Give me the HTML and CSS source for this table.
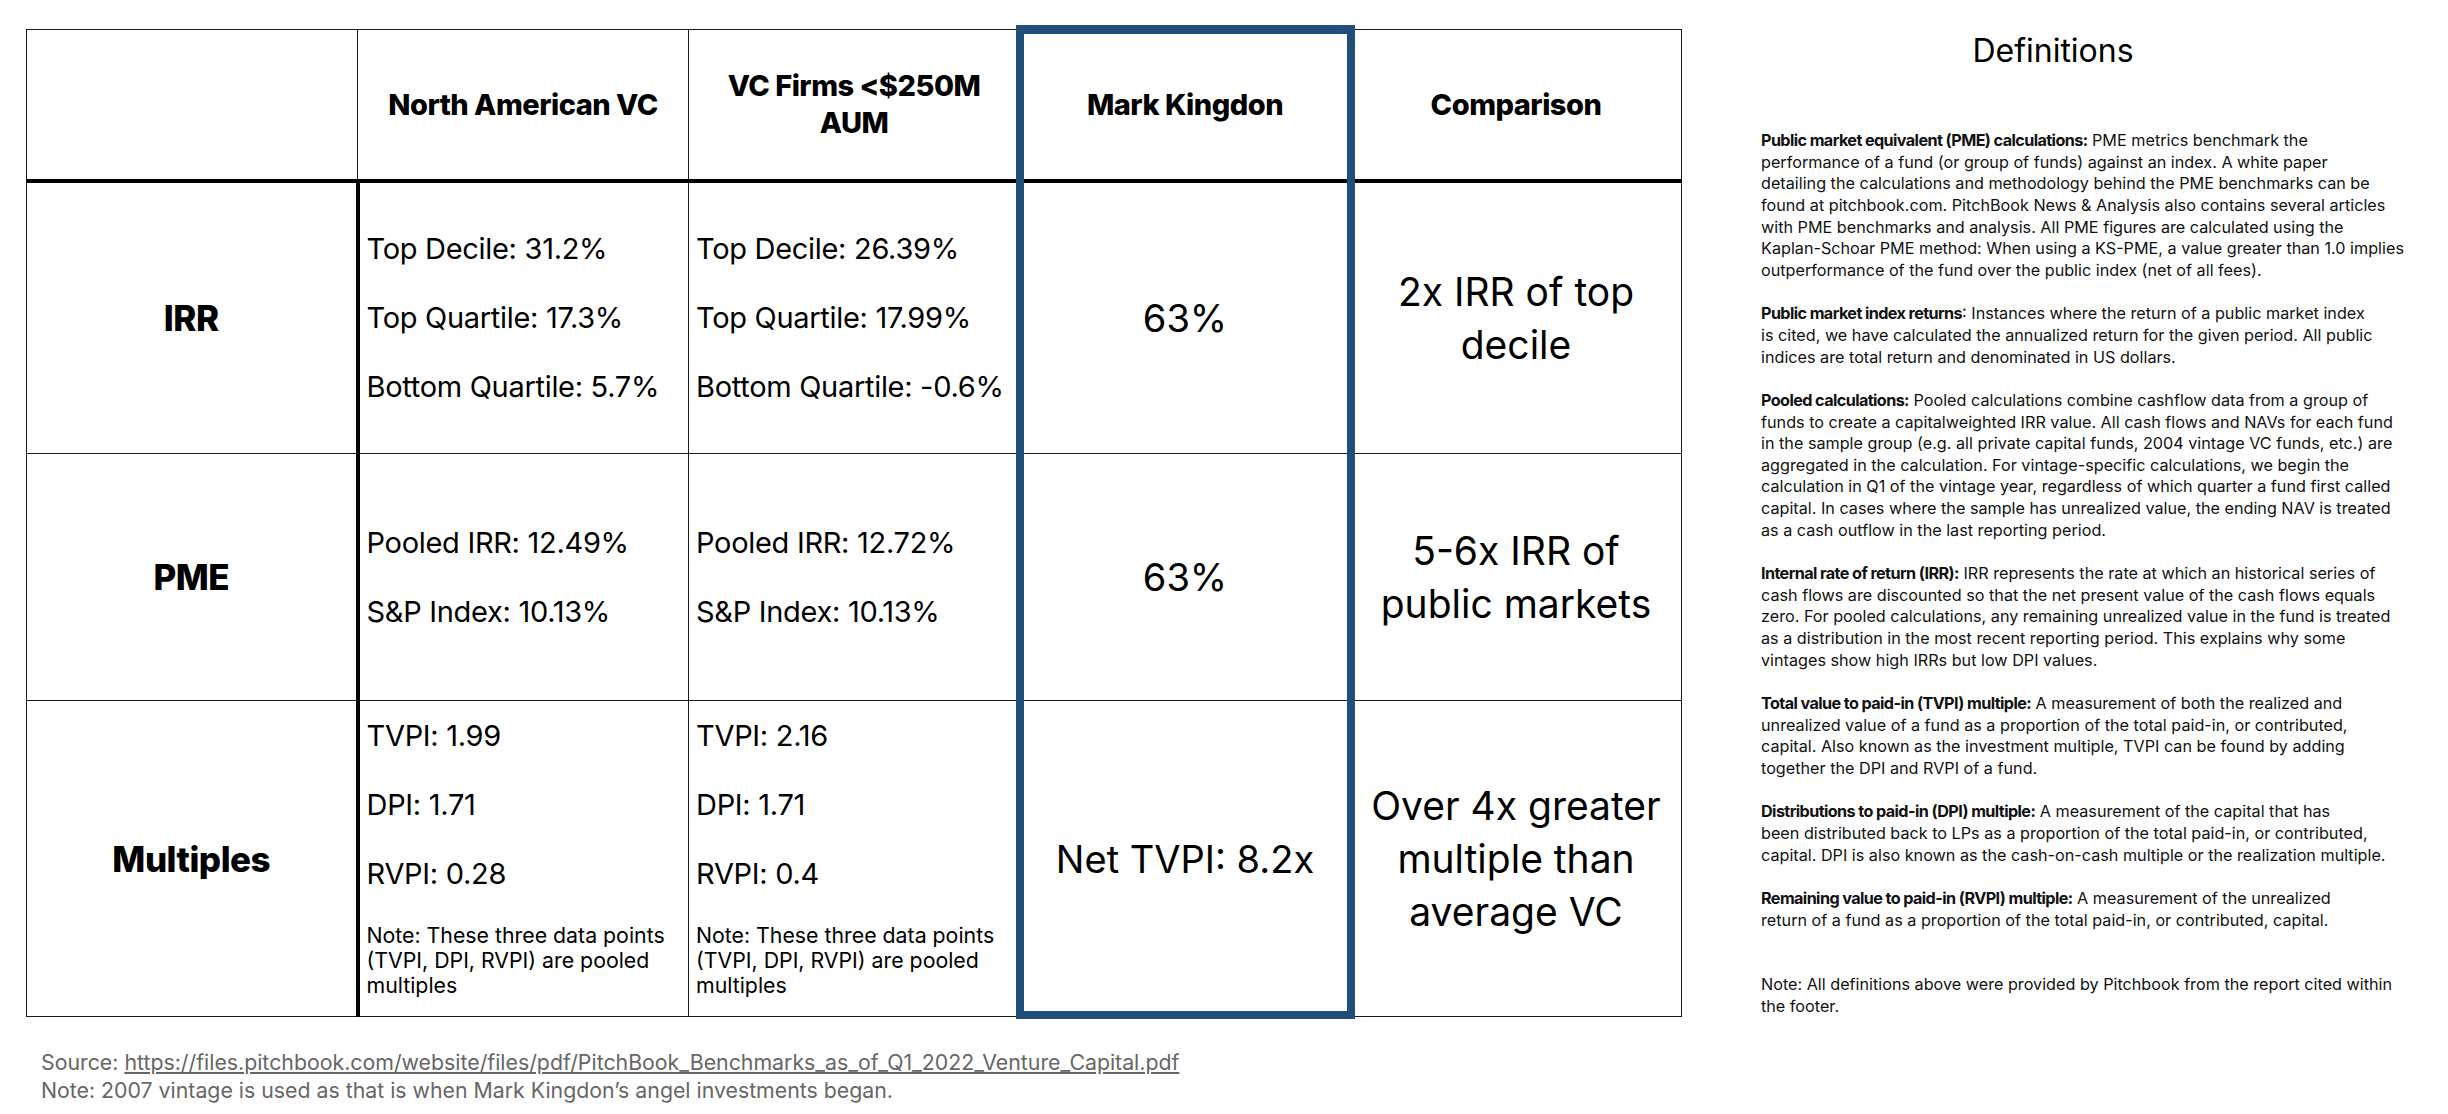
FILE: index.html
```html
<!DOCTYPE html>
<html lang="en">
<head>
<meta charset="utf-8">
<title>Mark Kingdon vs VC Benchmarks</title>
<link rel="stylesheet" href="styles.css">
</head>
<body>
<div class="page">
  <main class="left">
    <div class="table-wrap">
      <table class="bench">
        <colgroup>
          <col class="c"><col class="c"><col class="c"><col class="c"><col class="c">
        </colgroup>
        <thead>
          <tr class="r-head">
            <th class="corner"></th>
            <th>North American VC</th>
            <th>VC Firms &lt;$250M<br>AUM</th>
            <th>Mark Kingdon</th>
            <th>Comparison</th>
          </tr>
        </thead>
        <tbody>
          <tr class="r-irr">
            <th class="label">IRR</th>
            <td class="data">
              <div class="lines">
                <div>Top Decile: 31.2%</div>
                <div>Top Quartile: 17.3%</div>
                <div>Bottom Quartile: 5.7%</div>
              </div>
            </td>
            <td class="data">
              <div class="lines">
                <div>Top Decile: 26.39%</div>
                <div>Top Quartile: 17.99%</div>
                <div>Bottom Quartile: -0.6%</div>
              </div>
            </td>
            <td class="big">63%</td>
            <td class="cmp">2x IRR of top<br>decile</td>
          </tr>
          <tr class="r-pme">
            <th class="label">PME</th>
            <td class="data">
              <div class="lines">
                <div>Pooled IRR: 12.49%</div>
                <div>S&amp;P Index: 10.13%</div>
              </div>
            </td>
            <td class="data">
              <div class="lines">
                <div>Pooled IRR: 12.72%</div>
                <div>S&amp;P Index: 10.13%</div>
              </div>
            </td>
            <td class="big">63%</td>
            <td class="cmp">5-6x IRR of<br>public markets</td>
          </tr>
          <tr class="r-mult">
            <th class="label">Multiples</th>
            <td class="data">
              <div class="lines">
                <div>TVPI: 1.99</div>
                <div>DPI: 1.71</div>
                <div>RVPI: 0.28</div>
                <div class="note">Note: These three data points (TVPI, DPI, RVPI) are pooled multiples</div>
              </div>
            </td>
            <td class="data">
              <div class="lines">
                <div>TVPI: 2.16</div>
                <div>DPI: 1.71</div>
                <div>RVPI: 0.4</div>
                <div class="note">Note: These three data points (TVPI, DPI, RVPI) are pooled multiples</div>
              </div>
            </td>
            <td class="big">Net TVPI: 8.2x</td>
            <td class="cmp">Over 4x greater<br>multiple than<br>average VC</td>
          </tr>
        </tbody>
      </table>
      <div class="highlight" aria-hidden="true"></div>
    </div>
    <footer class="foot">
      <p>Source: <a href="#">https://files.pitchbook.com/website/files/pdf/PitchBook_Benchmarks_as_of_Q1_2022_Venture_Capital.pdf</a></p>
      <p>Note: 2007 vintage is used as that is when Mark Kingdon’s angel investments began.</p>
    </footer>
  </main>
  <aside class="defs">
    <h2>Definitions</h2>
    <p><b>Public market equivalent (PME) calculations:</b> PME metrics benchmark the<br>performance of a fund (or group of funds) against an index. A white paper<br>detailing the calculations and methodology behind the PME benchmarks can be<br>found at pitchbook.com. PitchBook News &amp; Analysis also contains several articles<br>with PME benchmarks and analysis. All PME figures are calculated using the<br>Kaplan-Schoar PME method: When using a KS-PME, a value greater than 1.0 implies<br>outperformance of the fund over the public index (net of all fees).</p>
    <p><b>Public market index returns</b>: Instances where the return of a public market index<br>is cited, we have calculated the annualized return for the given period. All public<br>indices are total return and denominated in US dollars.</p>
    <p><b>Pooled calculations:</b> Pooled calculations combine cashflow data from a group of<br>funds to create a capitalweighted IRR value. All cash flows and NAVs for each fund<br>in the sample group (e.g. all private capital funds, 2004 vintage VC funds, etc.) are<br>aggregated in the calculation. For vintage-specific calculations, we begin the<br>calculation in Q1 of the vintage year, regardless of which quarter a fund first called<br>capital. In cases where the sample has unrealized value, the ending NAV is treated<br>as a cash outflow in the last reporting period.</p>
    <p><b>Internal rate of return (IRR):</b> IRR represents the rate at which an historical series of<br>cash flows are discounted so that the net present value of the cash flows equals<br>zero. For pooled calculations, any remaining unrealized value in the fund is treated<br>as a distribution in the most recent reporting period. This explains why some<br>vintages show high IRRs but low DPI values.</p>
    <p><b>Total value to paid-in (TVPI) multiple:</b> A measurement of both the realized and<br>unrealized value of a fund as a proportion of the total paid-in, or contributed,<br>capital. Also known as the investment multiple, TVPI can be found by adding<br>together the DPI and RVPI of a fund.</p>
    <p><b>Distributions to paid-in (DPI) multiple:</b> A measurement of the capital that has<br>been distributed back to LPs as a proportion of the total paid-in, or contributed,<br>capital. DPI is also known as the cash-on-cash multiple or the realization multiple.</p>
    <p><b>Remaining value to paid-in (RVPI) multiple:</b> A measurement of the unrealized<br>return of a fund as a proportion of the total paid-in, or contributed, capital.</p>
    <p class="defs-note">Note: All definitions above were provided by Pitchbook from the report cited within<br>the footer.</p>
  </aside>
</div>
</body>
</html>
```

FILE: styles.css
```css
* { box-sizing: border-box; }

html, body {
  margin: 0;
  padding: 0;
  background: #ffffff;
  color: #000000;
  font-family: Inter, "Noto Sans", "Liberation Sans", sans-serif;
}

.page {
  display: flex;
  align-items: flex-start;
  width: 2448px;
  height: 1114px;
  overflow: hidden;
}

.left {
  padding: 29px 0 0 26px;
  width: 1700px;
  flex: none;
}

.table-wrap {
  position: relative;
  width: 1656px;
}

.bench {
  width: 1656px;
  table-layout: fixed;
  border-collapse: collapse;
}

.bench .c { width: 20%; }

.bench th,
.bench td {
  border: 1px solid #1a1a1a;
  padding: 0;
  vertical-align: middle;
}

.bench thead th {
  border-bottom: 4px solid #000;
  font-weight: 800;
  font-size: 29px;
  line-height: 37px;
  letter-spacing: -0.5px;
  text-align: center;
}

.r-head { height: 151px; }
.r-irr { height: 273px; }
.r-pme { height: 247px; }
.r-mult { height: 316px; }

.bench tbody th.label {
  border-right: 4px solid #000;
  font-weight: 800;
  font-size: 35px;
  letter-spacing: -0.5px;
  text-align: center;
}

.data {
  padding-left: 7px !important;
  font-size: 29px;
  letter-spacing: -0.3px;
  text-align: left;
}

.lines {
  display: flex;
  flex-direction: column;
  gap: 35px;
  line-height: 34px;
  white-space: nowrap;
}

.lines .note {
  margin-top: -3px;
  font-size: 21.3px;
  letter-spacing: 0;
  line-height: 25px;
  padding-right: 12px;
  white-space: normal;
}

.big {
  font-size: 38px;
  text-align: center;
}

.cmp {
  font-size: 39px;
  line-height: 53px;
  text-align: center;
}

.highlight {
  position: absolute;
  left: 990px;
  top: -4px;
  width: 339px;
  height: 994px;
  border: 8px solid #1f4e79;
  border-top-width: 9px;
  pointer-events: none;
}

.foot {
  margin-top: 31px;
  padding-left: 15px;
  color: #666666;
  font-size: 21.3px;
  line-height: 28px;
}

.foot p { margin: 0; }

.foot a {
  color: #666666;
  text-decoration: underline;
}

.defs {
  margin-left: 61px;
  width: 660px;
  flex: none;
  padding-top: 31px;
}

.defs h2 {
  margin: 0 0 59px 0;
  padding-right: 76px;
  font-size: 32px;
  font-weight: 400;
  line-height: 40px;
  text-align: center;
}

.defs p {
  margin: 0 0 21.65px 0;
  font-size: 16.2px;
  line-height: 21.65px;
  color: #111;
  white-space: nowrap;
}

.defs p b { font-weight: 700; letter-spacing: -0.6px; }

.defs .defs-note { margin-top: 43.3px; }
```
